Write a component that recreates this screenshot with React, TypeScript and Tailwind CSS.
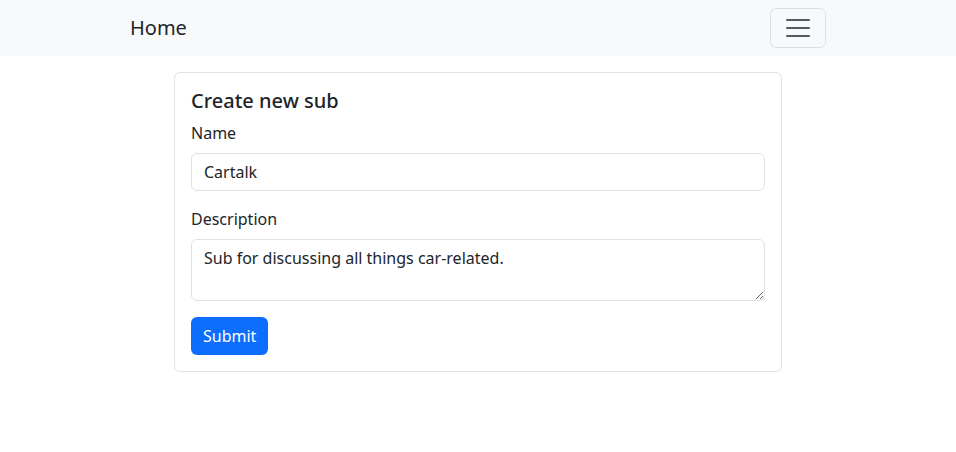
import React from "react";

export default function App() {
  return (
    <div className="min-h-[452px] bg-white text-[#212529] text-base" style={{ fontFamily: '"Noto Sans", "Open Sans", sans-serif' }}>
      <nav className="bg-[#f8f9fa] py-2">
        <div className="mx-auto w-[720px] px-3 flex items-center justify-between">
          <a className="text-[20px] leading-[30px] py-[5px] text-[#212529]">Home</a>
          <button className="w-[56px] h-[40px] border border-[rgba(0,0,0,0.1)] rounded-[6px] flex items-center justify-center">
            <svg width="30" height="30" viewBox="0 0 30 30">
              <path d="M4 7h22M4 15h22M4 23h22" stroke="rgba(33,37,41,0.75)" strokeWidth="2" strokeLinecap="round" strokeMiterlimit="10" />
            </svg>
          </button>
        </div>
      </nav>
      <div className="mx-auto w-[720px] px-3">
        <div className="mx-[44px] mt-4 border border-[#dee2e6] rounded-[6px] p-4">
          <h5 className="text-[20px] leading-[24px] font-medium mb-2">Create new sub</h5>
          <div className="mb-4">
            <label className="block leading-6 mb-2">Name</label>
            <input
              className="block w-full h-[38px] px-3 py-1.5 border border-[#dee2e6] rounded-[6px] leading-6 text-[#212529] outline-none"
              defaultValue="Cartalk"
            />
          </div>
          <div className="mb-4">
            <label className="block leading-6 mb-2">Description</label>
            <textarea
              rows={2}
              className="block w-full h-[62px] px-3 py-1.5 border border-[#dee2e6] rounded-[6px] leading-6 text-[#212529] outline-none resize-y"
              defaultValue="Sub for discussing all things car-related."
            />
          </div>
          <button className="h-[38px] px-3 py-1.5 bg-[#0d6efd] text-white rounded-[6px] leading-6">Submit</button>
        </div>
      </div>
    </div>
  );
}
